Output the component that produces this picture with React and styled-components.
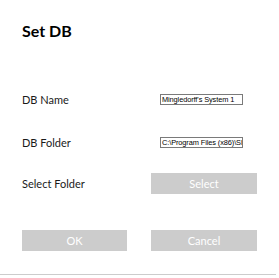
import React from "react";
import styled, { createGlobalStyle } from "styled-components";

const Global = createGlobalStyle`
  html, body { margin: 0; padding: 0; background: #ffffff; }
  body { font-family: Lato, "Noto Sans", sans-serif; }
`;

const Dialog = styled.div`
  width: 276px;
  height: 275px;
  border-bottom: 1px solid #cccccc;
  box-sizing: border-box;
  padding: 21px 0 0 22px;
  display: flex;
  flex-direction: column;
`;

const Title = styled.h1`
  margin: 0;
  font-family: Lato, sans-serif;
  font-weight: 700;
  font-size: 16px;
  line-height: 20px;
  color: #000000;
`;

const Row = styled.div`
  display: grid;
  grid-template-columns: 129px 106px;
  align-items: center;
  height: ${(p) => p.$h}px;
  margin-top: ${(p) => p.$top}px;
`;

const Label = styled.span`
  font-family: Lato, sans-serif;
  font-size: 11px;
  color: #1a1a1a;
`;

const Field = styled.input`
  box-sizing: border-box;
  margin-left: 9px;
  width: 83px;
  height: 11px;
  padding: 0 0 0 1px;
  border: 1px solid #7a7a7a;
  font-family: "Liberation Sans", Arial, sans-serif;
  font-size: 7.4px;
  letter-spacing: -0.1px;
  color: #000000;
  background: #ffffff;
  outline: none;
`;

const Button = styled.button`
  box-sizing: border-box;
  width: ${(p) => p.$w || 106}px;
  height: 21px;
  border: none;
  background: #cccccc;
  color: #ffffff;
  font-family: Lato, sans-serif;
  font-size: 11px;
  padding: 0;
  cursor: default;
`;

export default function App() {
  return (
    <>
      <Global />
      <Dialog>
        <Title>Set DB</Title>
        <Row $h={22} $top={47}>
          <Label>DB Name</Label>
          <Field defaultValue="Mingledorff's System 1" readOnly />
        </Row>
        <Row $h={22} $top={21}>
          <Label>DB Folder</Label>
          <Field defaultValue="C:\Program Files (x86)\Shared" readOnly />
        </Row>
        <Row $h={21} $top={20}>
          <Label>Select Folder</Label>
          <Button>Select</Button>
        </Row>
        <Row $h={21} $top={36}>
          <Button $w={105}>OK</Button>
          <Button>Cancel</Button>
        </Row>
      </Dialog>
    </>
  );
}
